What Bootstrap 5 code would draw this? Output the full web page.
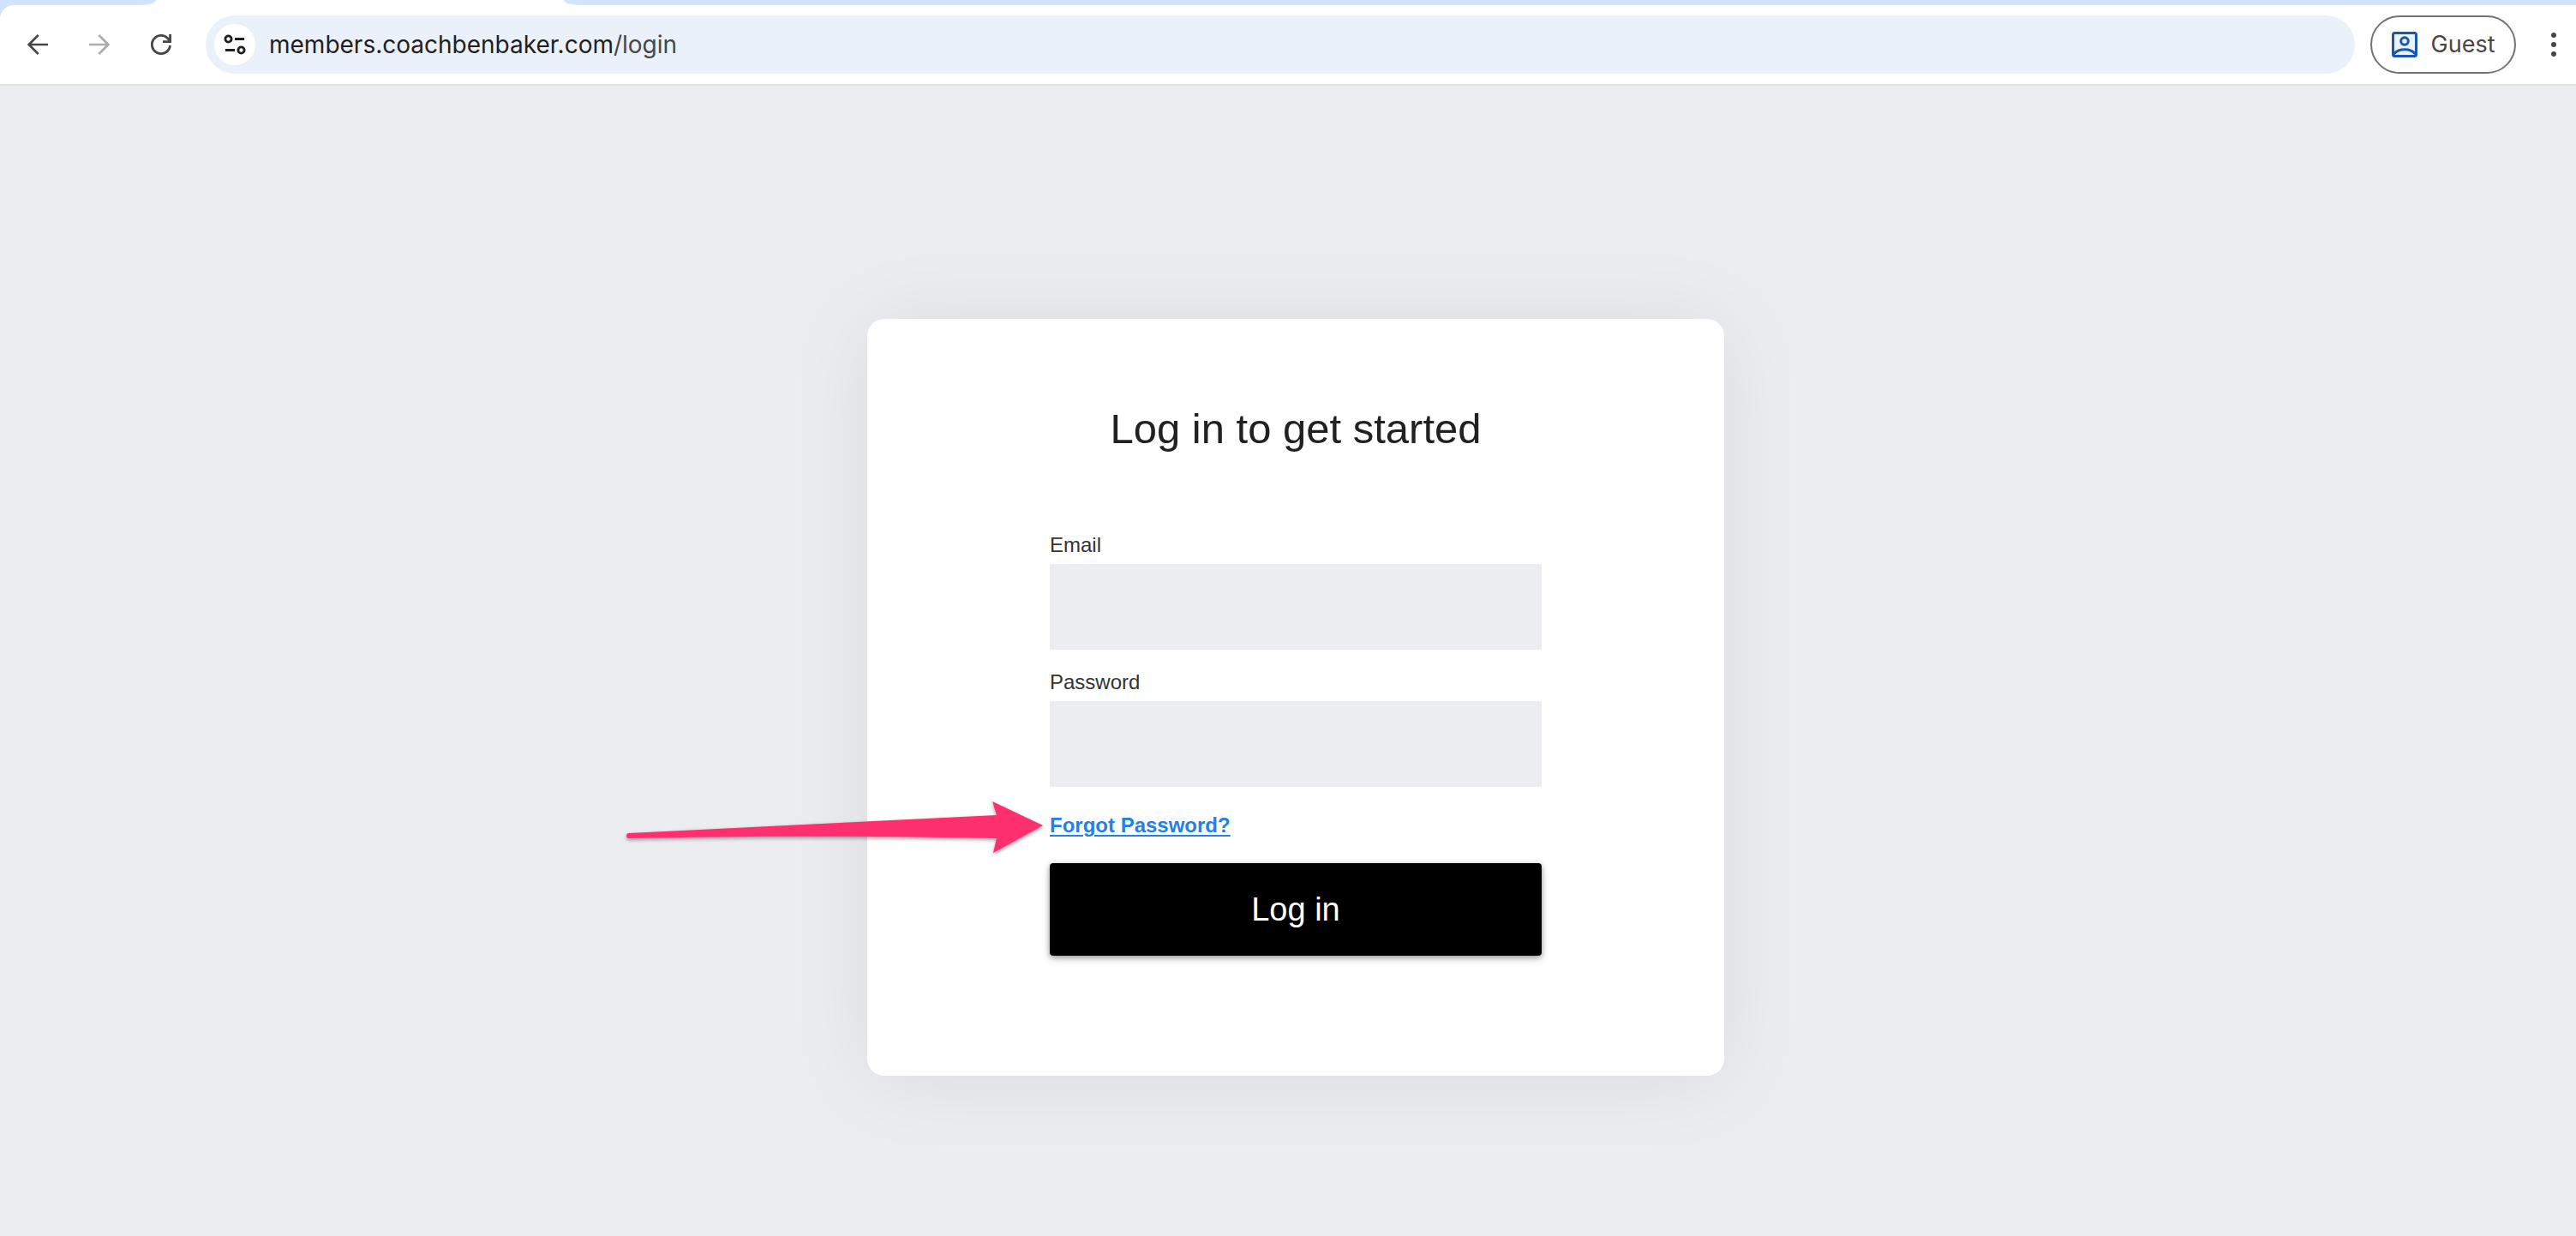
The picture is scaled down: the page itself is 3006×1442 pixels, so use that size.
<!DOCTYPE html>
<html lang="en">
<head>
<meta charset="utf-8">
<meta name="viewport" content="width=device-width, initial-scale=1">
<title>Log in</title>
<link href="https://cdn.jsdelivr.net/npm/bootstrap@5.3.0/dist/css/bootstrap.min.css" rel="stylesheet">
<style>
  body { background: #ecedf1; font-family: "Liberation Sans", Arial, sans-serif; color: #212121; }

  /* Browser chrome */
  .browser-top { background: #d3e3fd; font-family: Inter, sans-serif; }
  .tab-strip { height: 6px; background: #fff; }
  .strip-before, .strip-after { background: #d3e3fd; }
  .strip-before { width: 182px; border-bottom-right-radius: 18px 6px; }
  .strip-gap { width: 476px; }
  .strip-after { border-bottom-left-radius: 18px 6px; }
  .toolbar { background: #fff; height: 94px; padding: 0 14px 0 20px; border-bottom: 2px solid #dfe0e0; border-top-left-radius: 16px; }
  .tool-btn { width: 48px; height: 48px; padding: 0; border: 0; color: #474747; }
  .address { height: 68px; border-radius: 34px; background: #ebf1fa; padding: 0 16px 0 10px; margin: 0 18px 0 28px; }
  .site-info { width: 48px; height: 48px; padding: 0; border: 0; border-radius: 50%; background: #fff; color: #1f1f1f; }
  .url-part { font-size: 28px; line-height: 36px; color: #1f1f1f; }
  .url-path { color: #474747; }
  .guest-btn { width: 170px; height: 68px; border: 2px solid #747474; border-radius: 34px; color: #474747; font-size: 27px; line-height: 36px; padding: 0; margin-right: 32px; }
  .menu-btn { width: 24px; }

  /* Login page */
  .login-area { padding: 272px 0 150px 18px; }
  .login-card { width: 1000px; max-width: 100%; border: 0; border-radius: 20px; padding: 98px 213px 140px; box-shadow: 0 4px 100px rgba(0, 0, 0, .08); }
  .login-title { font-size: 49px; line-height: 60px; margin-bottom: 90px; font-weight: 400; }
  .field-label { font-size: 24px; line-height: 32px; margin-bottom: 6px; color: #333; }
  .field-box { height: 100px; border: 0; border-radius: 0; background: #ecedf1; font-size: 28px; margin-bottom: 22px; }
  .forgot-row { position: relative; margin-top: 29px; }
  .forgot { font-size: 24px; line-height: 32px; font-weight: 700; color: #2680e0; text-decoration-thickness: 2px; text-underline-offset: 3px; }
  .login-btn { height: 108px; border: 0; border-radius: 4px; background: #000; color: #fff; font-size: 38px; line-height: 48px; margin-top: 28px; box-shadow: 0 2px 6px rgba(0, 0, 0, .35), 0 4px 12px rgba(0, 0, 0, .12); }
  .pointer-arrow { position: absolute; right: 100%; top: -15px; margin-right: 6px; filter: drop-shadow(0 2px 2px rgba(90, 40, 60, .5)); }
</style>
<script src="https://cdn.jsdelivr.net/npm/bootstrap@5.3.0/dist/js/bootstrap.bundle.min.js"></script>
</head>
<body>
<header class="browser-top">
  <div class="tab-strip d-flex">
    <div class="strip-before"></div><div class="strip-gap"></div><div class="strip-after flex-grow-1"></div>
  </div>
  <div class="toolbar d-flex align-items-center">
    <div class="d-flex gap-4">
      <button class="btn tool-btn d-flex align-items-center justify-content-center" type="button" aria-label="Back">
        <svg width="24" height="24" viewBox="0 0 24 24" fill="none" stroke="currentColor" stroke-width="2.6"><path d="M24 12H2M12.7 1L1.7 12l11 11"/></svg>
      </button>
      <button class="btn tool-btn d-flex align-items-center justify-content-center" type="button" aria-label="Forward">
        <svg width="24" height="24" viewBox="0 0 24 24" fill="none" stroke="#acacac" stroke-width="2.6"><path d="M0 12h22M11.3 1l11 11-11 11"/></svg>
      </button>
      <button class="btn tool-btn d-flex align-items-center justify-content-center" type="button" aria-label="Reload">
        <svg width="24" height="24" viewBox="0 0 24 24" fill="none" stroke="currentColor" stroke-width="2.8"><path d="M22.5 13A10.600 10.600 0 1 1 20.200 5.300L22 8M22.600 0v8.700H14"/></svg>
      </button>
    </div>
    <div class="address d-flex align-items-center flex-grow-1">
      <button class="btn site-info d-flex align-items-center justify-content-center" type="button" aria-label="View site information">
        <svg width="26" height="24" viewBox="0 0 26 24" fill="none" stroke="currentColor" stroke-width="2.8"><circle cx="5.500" cy="5.500" r="3.600"/><path d="M13 5.500h11M2 18.500h11"/><circle cx="20.500" cy="18.500" r="3.600"/></svg>
      </button>
      <div class="d-flex ms-3" role="textbox" tabindex="0" aria-label="Address"><span class="url-part">members.coachbenbaker.com</span><span class="url-part url-path">/login</span></div>
    </div>
    <button class="btn guest-btn d-flex align-items-center justify-content-center gap-3" type="button">
      <svg width="30" height="30" viewBox="0 0 30 30" fill="none" stroke="#1a56b0" stroke-width="3"><rect x="1.500" y="1.500" width="27" height="27" rx="2" fill="#e9f3ff"/><circle cx="15" cy="11" r="4.300"/><path d="M2.500 26c3-4 7.500-5.300 12.500-5.300S24.500 22 27.500 26"/></svg>
      <span>Guest</span>
    </button>
    <button class="btn tool-btn menu-btn d-flex align-items-center justify-content-center" type="button" aria-label="Menu">
      <svg width="6" height="28" viewBox="0 0 6 28" fill="currentColor"><circle cx="3" cy="3" r="3"/><circle cx="3" cy="14" r="3"/><circle cx="3" cy="25" r="3"/></svg>
    </button>
  </div>
</header>

<main class="login-area d-flex justify-content-center">
  <div class="card login-card">
    <h1 class="login-title text-center">Log in to get started</h1>
    <form>
      <label class="field-label d-block" for="email">Email</label>
      <input class="form-control field-box" type="email" id="email">
      <label class="field-label d-block" for="password">Password</label>
      <input class="form-control field-box" type="password" id="password">
      <div class="forgot-row d-flex">
        <svg class="pointer-arrow" width="490" height="68" viewBox="0 0 490 68" aria-hidden="true"><path d="M5 40L434 19 429 3 488 31 430 63 434 46C300 43 150 43 5 46A3 3 0 0 1 5 40Z" fill="#fe2f6e"/></svg>
        <a class="forgot" href="#">Forgot Password?</a>
      </div>
      <button class="btn login-btn w-100" type="submit">Log in</button>
    </form>
  </div>
</main>
</body>
</html>
